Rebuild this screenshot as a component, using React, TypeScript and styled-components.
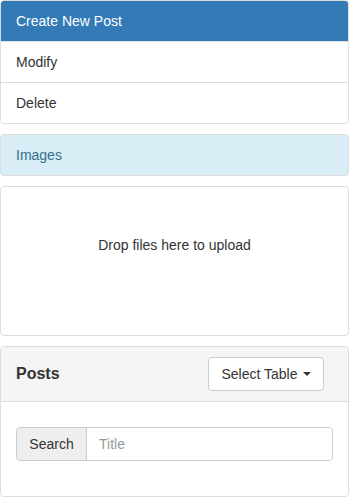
import React from "react";
import styled, { createGlobalStyle } from "styled-components";

const Global = createGlobalStyle`
  html, body { margin: 0; padding: 0; background: #fff; }
  body {
    font-family: "Liberation Sans", Arial, Helvetica, sans-serif;
    font-size: 14px;
    line-height: 20px;
    color: #333;
  }
  * { box-sizing: border-box; }
`;

const Page = styled.div`
  width: 349px;
  display: flex;
  flex-direction: column;
  gap: 10px;
`;

const ListGroup = styled.div`
  display: flex;
  flex-direction: column;
  border: 1px solid #ddd;
  border-radius: 4px;
  overflow: hidden;
`;

const ListItem = styled.div<{ $active?: boolean }>`
  height: ${(p) => (p.$active ? "40px" : "41px")};
  padding: 10px 15px;
  border-top: ${(p) => (p.$active ? "none" : "1px solid #ddd")};
  background: ${(p) => (p.$active ? "#337ab7" : "#fff")};
  color: ${(p) => (p.$active ? "#fff" : "#333")};
`;

const InfoHeading = styled.div`
  height: 42px;
  padding: 10px 15px;
  border: 1px solid #ddd;
  border-radius: 4px;
  background: #d9edf7;
  color: #31708f;
`;

const DropZone = styled.div`
  height: 150px;
  border: 1px solid #ddd;
  border-radius: 4px;
  padding-top: 48px;
  text-align: center;
  color: #333;
`;

const Panel = styled.div`
  height: 151px;
  border: 1px solid #ddd;
  border-radius: 4px;
  display: flex;
  flex-direction: column;
  overflow: hidden;
`;

const PanelHeading = styled.div`
  height: 55px;
  padding: 10px 24px 10px 15px;
  background: #f5f5f5;
  border-bottom: 1px solid #ddd;
  display: flex;
  align-items: center;
  justify-content: space-between;
`;

const PanelTitle = styled.span`
  font-size: 16px;
  font-weight: bold;
  color: #333;
`;

const DropButton = styled.button`
  height: 34px;
  width: 116px;
  padding: 6px 12px;
  border: 1px solid #ccc;
  border-radius: 4px;
  background: #fff;
  font-family: inherit;
  font-size: 14px;
  line-height: 20px;
  color: #333;
  display: flex;
  align-items: center;
  justify-content: center;
  gap: 5px;
`;

const Caret = styled.span`
  width: 0;
  height: 0;
  border-top: 4px solid #333;
  border-left: 4px solid transparent;
  border-right: 4px solid transparent;
`;

const PanelBody = styled.div`
  padding: 25px 15px 15px;
`;

const InputGroup = styled.div`
  display: flex;
  height: 34px;
  border: 1px solid #ccc;
  border-radius: 4px;
  overflow: hidden;
`;

const Addon = styled.span`
  width: 70px;
  background: #eee;
  border-right: 1px solid #ccc;
  padding: 6px 12px;
  color: #333;
  text-align: center;
`;

const Field = styled.input`
  flex: 1;
  border: none;
  outline: none;
  padding: 6px 12px;
  font-family: inherit;
  font-size: 14px;
  color: #555;
  &::placeholder { color: #999; }
`;

export default function App() {
  return (
    <>
      <Global />
      <Page>
        <ListGroup>
          <ListItem $active>Create New Post</ListItem>
          <ListItem>Modify</ListItem>
          <ListItem>Delete</ListItem>
        </ListGroup>
        <InfoHeading>Images</InfoHeading>
        <DropZone>Drop files here to upload</DropZone>
        <Panel>
          <PanelHeading>
            <PanelTitle>Posts</PanelTitle>
            <DropButton>
              Select Table <Caret />
            </DropButton>
          </PanelHeading>
          <PanelBody>
            <InputGroup>
              <Addon>Search</Addon>
              <Field placeholder="Title" />
            </InputGroup>
          </PanelBody>
        </Panel>
      </Page>
    </>
  );
}
